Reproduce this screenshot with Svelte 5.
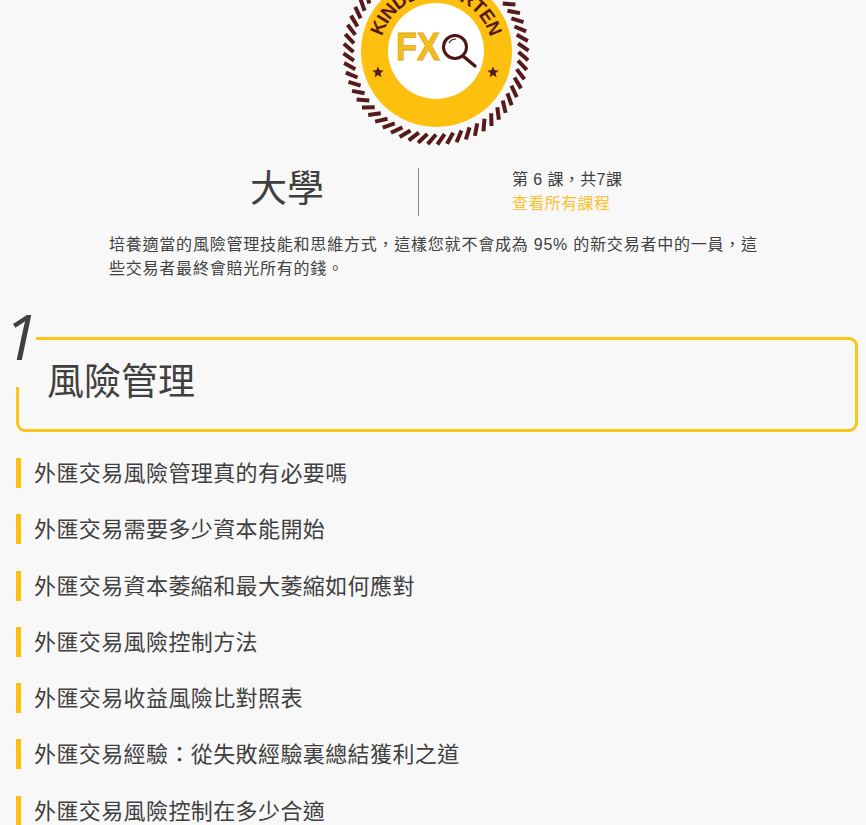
<script>
	const lessons = [
		'外匯交易風險管理真的有必要嗎',
		'外匯交易需要多少資本能開始',
		'外匯交易資本萎縮和最大萎縮如何應對',
		'外匯交易風險控制方法',
		'外匯交易收益風險比對照表',
		'外匯交易經驗：從失敗經驗裏總結獲利之道',
		'外匯交易風險控制在多少合適'
	];

	// rope around the badge: short slanted strokes on a ring
	const cx = 436;
	const cy = 52;
	const rope = [];
	for (let i = 0; i < 60; i++) {
		const a = (i / 60) * Math.PI * 2;
		const b = a + 0.09;
		rope.push({
			x1: cx + Math.cos(a) * 82.5,
			y1: cy + Math.sin(a) * 82.5,
			x2: cx + Math.cos(b) * 92.5,
			y2: cy + Math.sin(b) * 92.5
		});
	}
</script>

<div class="page">
	<div class="logo">
		<svg width="200" height="150" viewBox="336 0 200 150">
			<defs>
				<path id="arc" d="M 380 52 A 56 56 0 0 1 492 52" />
			</defs>
			{#each rope as r}
				<line x1={r.x1} y1={r.y1} x2={r.x2} y2={r.y2} stroke="#561a1c" stroke-width="4" />
			{/each}
			<circle cx="436.5" cy="51.5" r="75.5" fill="#fdc00f" />
			<circle cx="436" cy="51" r="48" fill="#fff" />
			<text class="ring-text" text-anchor="middle">
				<textPath href="#arc" startOffset="50%">KINDERGARTEN</textPath>
			</text>
			<text x="396" y="60" class="fx" textLength="44" lengthAdjust="spacingAndGlyphs">FX</text>
			<circle cx="455" cy="47" r="11.5" fill="none" stroke="#4c1416" stroke-width="3" />
			<path d="M 463 56 L 475 66" stroke="#4c1416" stroke-width="3.4" stroke-linecap="round" />
			<path d="M 449 43 Q 451 39 456 39" fill="none" stroke="#4c1416" stroke-width="1.2" />
			<polygon points="378,66.5 379.6,70.3 383.6,70.6 380.5,73.2 381.5,77.2 378,75 374.5,77.2 375.5,73.2 372.4,70.6 376.4,70.3" fill="#561a1c" />
			<polygon points="493,66.5 494.6,70.3 498.6,70.6 495.5,73.2 496.5,77.2 493,75 489.5,77.2 490.5,73.2 487.4,70.6 491.4,70.3" fill="#561a1c" />
		</svg>
	</div>

	<div class="level">
		<h1>大學</h1>
		<div class="level-info">
			<div>第 6 課，共7課</div>
			<div class="all">查看所有課程</div>
		</div>
	</div>

	<p class="desc">培養適當的風險管理技能和思維方式，這樣您就不會成為 95% 的新交易者中的一員，這些交易者最終會賠光所有的錢。</p>

	<div class="section">
		<span class="patch"></span>
		<span class="num">1</span>
		<h2>風險管理</h2>
	</div>

	<ul>
		{#each lessons as lesson}
			<li>{lesson}</li>
		{/each}
	</ul>
</div>

<style>
	:global(body) {
		background: #f8f8f8;
	}

	.page {
		height: 825px;
		overflow: hidden;
		color: #404040;
		font-family: "Liberation Sans", "Noto Sans CJK TC", sans-serif;
	}

	.logo {
		padding-left: 6px;
	}

	.logo svg {
		display: block;
		margin: 0 auto;
	}

	.ring-text {
		font: bold 19px "Liberation Sans", sans-serif;
		letter-spacing: -0.7px;
		fill: #561a1c;
	}

	.fx {
		font: bold 38px "Liberation Sans", sans-serif;
		fill: #f5bd1c;
		stroke: #dca50c;
		stroke-width: 0.8;
	}

	.level {
		display: flex;
		align-items: stretch;
		margin: 18px 0 0 156px;
		height: 48px;
	}

	h1 {
		width: 262px;
		margin: 0;
		font-size: 37px;
		font-weight: 400;
		line-height: 44px;
		text-align: center;
	}

	.level-info {
		padding-left: 93px;
		border-left: 1px solid #8c8c8c;
		font-size: 16px;
		line-height: 24px;
		letter-spacing: 0.4px;
	}

	.all {
		color: #fdc02f;
	}

	.desc {
		width: 660px;
		margin: 17px 0 0 109px;
		font-size: 16px;
		line-height: 24px;
		letter-spacing: 0.78px;
	}

	.section {
		position: relative;
		box-sizing: border-box;
		height: 95px;
		margin: 56px 8px 0 16px;
		padding: 19px 0 0 28px;
		border: 3px solid #fdc316;
		border-radius: 9px;
	}

	.patch {
		position: absolute;
		left: -3px;
		top: -3px;
		width: 20px;
		height: 50px;
		background: #f8f8f8;
	}

	.num {
		position: absolute;
		left: -15px;
		top: -35px;
		font-family: "Open Sans", sans-serif;
		font-size: 62px;
		font-style: italic;
		line-height: 62px;
	}

	h2 {
		margin: 0;
		font-size: 37px;
		font-weight: 400;
		line-height: 48px;
	}

	ul {
		margin: 26px 0 0 16px;
		padding: 0;
		list-style: none;
	}

	li {
		height: 30px;
		margin-bottom: 26.3px;
		padding-left: 13px;
		border-left: 5px solid #fdc00f;
		font-size: 22px;
		line-height: 32px;
		letter-spacing: 0.4px;
	}
</style>
